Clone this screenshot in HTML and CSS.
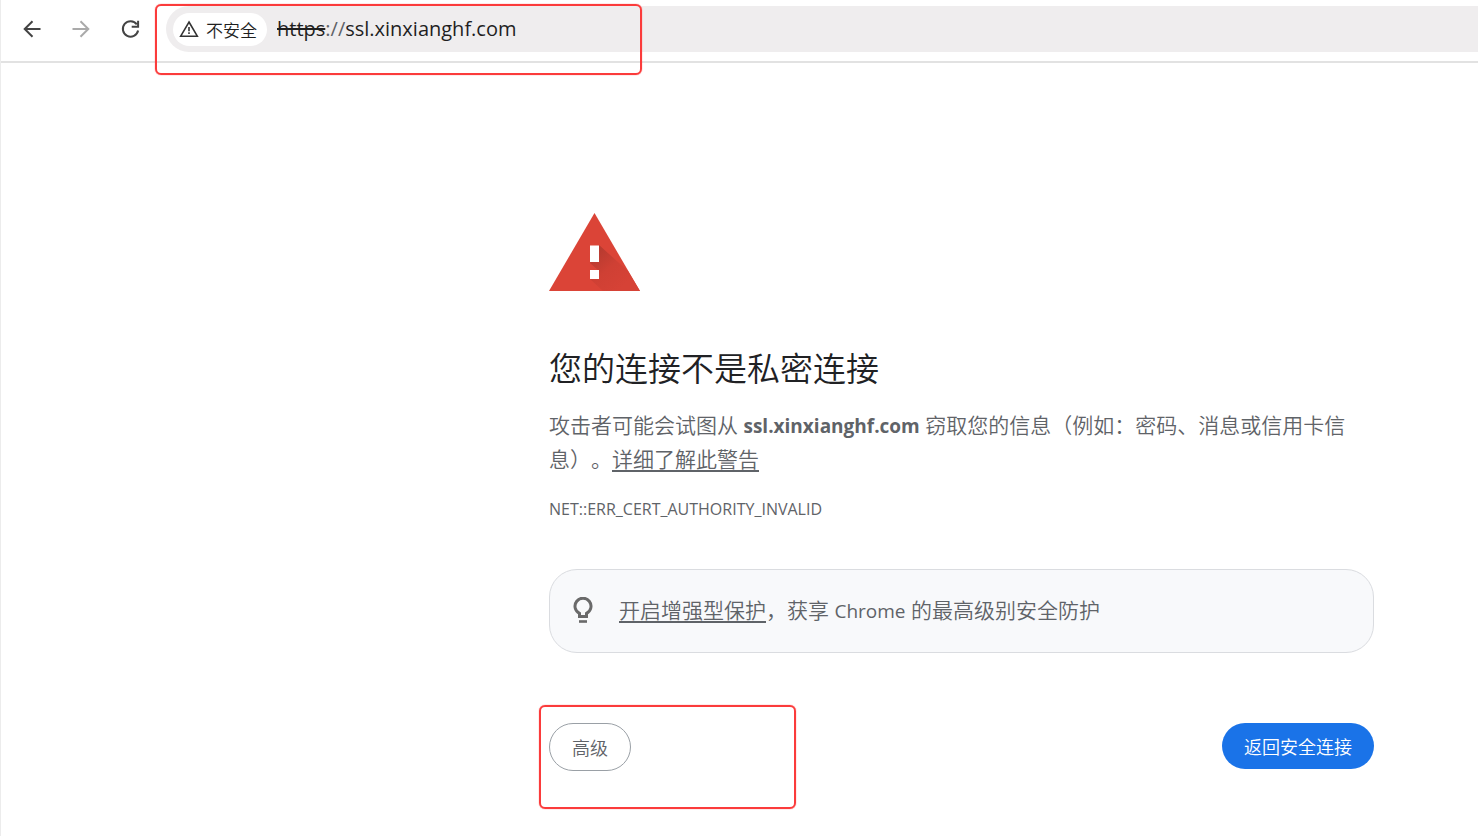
FILE: index.html
```html
<!DOCTYPE html>
<html lang="zh-CN">
<head>
<meta charset="UTF-8">
<meta name="viewport" content="width=device-width, initial-scale=1">
<title>隐私设置错误</title>
<link rel="stylesheet" href="styles.css">
</head>
<body>

  <header class="toolbar">
    <nav class="nav-buttons">
      <button class="nav-btn" type="button" aria-label="后退">
        <svg viewBox="0 0 20 20" width="20" height="20"><path d="M18.500 10H3M10.500 2.200 2.700 10l7.800 7.800"/></svg>
      </button>
      <button class="nav-btn" type="button" aria-label="前进" disabled>
        <svg viewBox="0 0 20 20" width="20" height="20"><path d="M1.500 10H17M9.500 2.200 17.300 10l-7.800 7.800"/></svg>
      </button>
      <button class="nav-btn" type="button" aria-label="重新加载">
        <svg viewBox="0 0 20 20" width="20" height="20"><path d="M16.800 5.400A7.700 7.700 0 1 0 18.100 11.500M18.100 1.800V7.800H11.700"/></svg>
      </button>
    </nav>
    <div class="omnibox">
      <button class="chip" type="button">
        <svg viewBox="0 0 20 18" width="20" height="18">
          <path class="chip-line" d="M10 2 18.300 16.200H1.700Z"/>
          <path class="chip-mark" d="M9.200 7h1.600v4.200H9.200zM9.200 12.300h1.600v1.700H9.200z"/>
        </svg>
        <span>不安全</span>
      </button>
      <div class="url"><s>https</s><span class="scheme">://</span>ssl.xinxianghf.com</div>
      <div class="mark mark-url"></div>
    </div>
  </header>

  <main class="interstitial">
    <svg class="warning-icon" viewBox="0 0 91 78" width="91" height="78">
      <defs>
        <linearGradient id="shade" gradientUnits="userSpaceOnUse" x1="50" y1="34" x2="80" y2="68">
          <stop offset="0" stop-color="#b53a2f"/>
          <stop offset="0.500" stop-color="#cf4034"/>
          <stop offset="1" stop-color="#d64236"/>
        </linearGradient>
      </defs>
      <path fill="#db4437" d="M45.500 0 91 78H0z"/>
      <path fill="url(#shade)" d="M50 32 79 58 91 78H54L41 66l9-8-9-8z"/>
      <path fill="#fff" d="M41 32.500h9v16.500h-9zM41 57h9v9h-9z"/>
    </svg>

    <h1>您的连接不是私密连接</h1>
    <p class="message">攻击者可能会试图从 <strong>ssl.xinxianghf.com</strong> 窃取您的信息（例如：密码、消息或信用卡信息）。<a href="#">详细了解此警告</a></p>
    <p class="error-code">NET::ERR_CERT_AUTHORITY_INVALID</p>

    <div class="promo">
      <svg viewBox="0 0 20 28" width="20" height="28">
        <path class="bulb" d="M6.500 19.500V16.400A8 8 0 1 1 13.500 16.400V19.500Z"/>
        <path class="base" d="M6 23.200h8v2.600H6z"/>
      </svg>
      <p><a href="#">开启增强型保护</a>，获享 <span class="brand">Chrome</span> 的最高级别安全防护</p>
    </div>

    <div class="actions">
      <div class="advanced">
        <button class="btn btn-outline" type="button">高级</button>
        <div class="mark mark-advanced"></div>
      </div>
      <button class="btn btn-primary" type="button">返回安全连接</button>
    </div>
  </main>

</body>
</html>
```

FILE: styles.css
```css
* {
  box-sizing: border-box;
}

body {
  margin: 0;
  min-height: 100vh;
  border-left: 1px solid #ececec;
  background: #fff;
  color: #5f6368;
  font-family: "Open Sans", "Noto Sans CJK SC", sans-serif;
  font-weight: 350;
  text-spacing-trim: space-all;
  overflow-x: hidden;
}

button {
  font-family: inherit;
  font-weight: inherit;
  cursor: pointer;
}

a {
  color: inherit;
  text-decoration-thickness: 2px;
  text-underline-offset: 3px;
}

/* Toolbar */
.toolbar {
  display: flex;
  gap: 26px;
  padding: 6px 0 9px 21px;
  border-bottom: 2px solid #e2e2e2;
}

.nav-buttons {
  display: flex;
  align-items: center;
  gap: 29px;
}

.nav-btn {
  display: flex;
  padding: 0;
  border: none;
  background: none;
}

.nav-btn svg {
  fill: none;
  stroke: #444;
  stroke-width: 2;
}

.nav-btn:disabled svg {
  stroke: #aaa;
}

.omnibox {
  position: relative;
  flex: 1;
  display: flex;
  align-items: center;
  gap: 10px;
  height: 46px;
  padding-left: 7px;
  border-radius: 23px 0 0 23px;
  background: #efedee;
}

.chip {
  display: flex;
  align-items: center;
  gap: 7px;
  height: 33px;
  padding: 0 10px 0 6px;
  border: none;
  border-radius: 17px;
  background: #fff;
  color: #1f1f1f;
  font-size: 17px;
}

.chip-line {
  fill: none;
  stroke: #333;
  stroke-width: 1.6;
}

.chip-mark {
  fill: #333;
}

.url {
  color: #1f1f1f;
  font-size: 20px;
  font-weight: 400;
  line-height: 24px;
}

.scheme {
  color: #5f6368;
}

/* Red highlight frames */
.mark {
  position: absolute;
  border: 2px solid #fb3b3b;
  border-radius: 6px;
  box-shadow: 0 0 1px #fb3b3b;
  pointer-events: none;
}

.mark-url {
  top: -2px;
  left: -11px;
  width: 487px;
  height: 71px;
}

.mark-advanced {
  top: -18px;
  left: -10px;
  width: 257px;
  height: 104px;
}

/* Warning page */
.interstitial {
  max-width: 825px;
  margin: 150px 104px 0 auto;
}

.warning-icon {
  display: block;
}

h1 {
  margin: 56px 0 18px;
  color: #202124;
  font-size: 33px;
  font-weight: 350;
  line-height: 44px;
}

.message {
  margin: 0;
  font-size: 21px;
  line-height: 33px;
}

.message strong {
  font-size: 19px;
  font-weight: 700;
}

.error-code {
  margin: 21px 0 48px;
  font-size: 16px;
  font-weight: 400;
  line-height: 24px;
}

.promo {
  display: flex;
  align-items: center;
  gap: 26px;
  padding: 24px 23px;
  border: 1px solid #dadce0;
  border-radius: 28px;
  background: #f8f9fb;
}

.promo p {
  margin: 0;
  font-size: 21px;
  line-height: 33px;
}

.brand {
  font-size: 19px;
  font-weight: 400;
}

.bulb {
  fill: none;
  stroke: #6a6a6a;
  stroke-width: 3;
}

.base {
  fill: #6a6a6a;
}

.actions {
  display: flex;
  justify-content: space-between;
  align-items: flex-start;
  margin-top: 70px;
}

.advanced {
  position: relative;
}

.btn {
  display: block;
  height: 46px;
  padding: 0 22px;
  border: none;
  border-radius: 24px;
  font-size: 18px;
}

.btn-outline {
  height: 48px;
  border: 1px solid #9aa0a6;
  background: #fff;
  color: #5f6368;
}

.btn-primary {
  background: #1a73e8;
  color: #fff;
}
```
